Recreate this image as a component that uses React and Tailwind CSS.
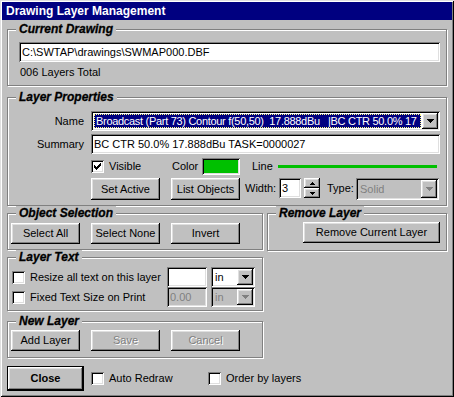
import React from 'react';

const sunken =
  'shadow-[inset_1px_1px_#808080,inset_-1px_-1px_#ffffff,inset_2px_2px_#000000,inset_-2px_-2px_#dfdfdf]';
const raised =
  'shadow-[inset_-1px_-1px_#000000,inset_1px_1px_#ffffff,inset_-2px_-2px_#808080,inset_2px_2px_#dfdfdf]';
const dimText = 'text-[#808080] [text-shadow:1px_1px_0_#ffffff]';

/* ─── small win32 widgets ─── */
function Group({ title, className = '', children }) {
  return (
    <div
      className={`border border-[#808080] shadow-[inset_1px_1px_#ffffff,1px_1px_#ffffff] ${className}`}
    >
      <div className="-mt-[8px] ml-[8px] w-fit bg-[#c0c0c0] px-[3px] text-[12px] leading-[14px] font-bold italic [-webkit-text-stroke:0.3px_#000000]">
        {title}
      </div>
      {children}
    </div>
  );
}

function Btn({ children, className = '', disabled }) {
  return (
    <button
      type="button"
      className={`${raised} flex shrink-0 items-center justify-center bg-[#c0c0c0] text-[11px] ${
        disabled ? dimText : 'text-black'
      } ${className}`}
    >
      {children}
    </button>
  );
}

function Check({ checked }) {
  return (
    <span
      className={`${sunken} flex h-[13px] w-[13px] shrink-0 items-center justify-center bg-white`}
    >
      {checked && (
        <svg width="7" height="7" viewBox="0 0 7 7" shapeRendering="crispEdges">
          <path
            d="M0 2h1v1h1v1h1v-1h1v-1h1v-1h1v-1h1v3h-1v1h-1v1h-1v1h-1v1h-1v-1h-1v-1h-1z"
            fill="#000000"
          />
        </svg>
      )}
    </span>
  );
}

function Arrow({ up, disabled, w = 7, h = 4 }) {
  return (
    <svg width={w} height={h} viewBox={`0 0 ${w} ${h}`} shapeRendering="crispEdges">
      <path
        d={up ? `M0 ${h}H${w}L${w / 2} 0z` : `M0 0H${w}L${w / 2} ${h}z`}
        fill={disabled ? '#808080' : '#000000'}
      />
    </svg>
  );
}

function Select({ className = '', disabled, children }) {
  return (
    <div
      className={`${sunken} flex shrink-0 p-[2px] ${disabled ? 'bg-[#c0c0c0]' : 'bg-white'} ${className}`}
    >
      <div className="flex min-w-0 flex-1 items-center overflow-hidden whitespace-pre">
        {children}
      </div>
      <span className={`${raised} flex w-[16px] shrink-0 items-center justify-center bg-[#c0c0c0]`}>
        <Arrow disabled={disabled} />
      </span>
    </div>
  );
}

function Field({ className = '', disabled, children }) {
  return (
    <div
      className={`${sunken} flex shrink-0 items-center overflow-hidden whitespace-nowrap pl-[3px] ${
        disabled ? 'bg-[#c0c0c0] text-[#808080]' : 'bg-white'
      } ${className}`}
    >
      {children}
    </div>
  );
}

export default function App() {
  return (
    <div className="h-[397px] w-[454px] overflow-hidden bg-[#c0c0c0] p-[2px] font-['Liberation_Sans',Arial,sans-serif] text-[11px] leading-[13px] text-black shadow-[inset_1px_1px_#dfdfdf,inset_-1px_-1px_#000000,inset_2px_2px_#ffffff,inset_-2px_-2px_#808080]">
      {/* title bar */}
      <div className="flex h-[18px] items-center bg-[#000080] pl-[4px] text-[12px] font-bold text-white">
        Drawing Layer Management
      </div>

      <div className="px-[5px]">
        {/* current drawing */}
        <Group title="Current Drawing" className="mt-[9px] h-[57px]">
          <Field className="ml-[11px] mt-[6px] h-[20px] w-[421px]">
            {'C:\\SWTAP\\drawings\\SWMAP000.DBF'}
          </Field>
          <div className="ml-[12px] mt-[4px]">006 Layers Total</div>
        </Group>

        {/* layer properties */}
        <Group title="Layer Properties" className="mt-[11px] h-[109px]">
          <div className="mt-[7px] flex items-center">
            <span className="w-[76px] text-right">Name</span>
            <Select className="ml-[7px] h-[20px] w-[349px]">
              <div className="flex h-full flex-1 items-center p-[1px]">
                <span className="flex h-full flex-1 items-center overflow-hidden border border-dotted border-[#ffff80] bg-[#000080] pl-[1px] tracking-[-0.3px] text-white">
                  {'Broadcast (Part 73) Contour f(50,50)  17.888dBu   |BC CTR 50.0% 17'}
                </span>
              </div>
            </Select>
          </div>
          <div className="mt-[3px] flex items-center">
            <span className="w-[76px] text-right">Summary</span>
            <Field className="ml-[7px] h-[20px] w-[349px]">
              BC CTR 50.0% 17.888dBu TASK=0000027
            </Field>
          </div>
          <div className="mt-[4px] flex h-[17px] items-center pl-[83px]">
            <div className="flex w-[81px] items-center gap-[5px]">
              <Check checked />
              <span>Visible</span>
            </div>
            <span className="w-[30px]">Color</span>
            <span className={`${sunken} h-[17px] w-[38px] bg-white p-[2px]`}>
              <span className="block h-full w-full bg-[#00c000]" />
            </span>
            <span className="ml-[12px] w-[26px]">Line</span>
            <span className="h-[3px] w-[159px] bg-[#00c000]" />
          </div>
          <div className="mt-[3px] flex items-start pl-[83px]">
            <Btn className="h-[22px] w-[69px]">Set Active</Btn>
            <Btn className="ml-[11px] h-[22px] w-[69px]">List Objects</Btn>
            <span className="flex h-[20px] w-[39px] items-center pl-[5px]">Width:</span>
            <Field className="h-[20px] w-[22px]">3</Field>
            <div className="ml-[3px] flex h-[20px] w-[16px] flex-col">
              <span className={`${raised} flex flex-1 items-center justify-center bg-[#c0c0c0]`}>
                <Arrow up w={5} h={3} />
              </span>
              <span className={`${raised} flex flex-1 items-center justify-center bg-[#c0c0c0]`}>
                <Arrow w={5} h={3} />
              </span>
            </div>
            <span className="flex h-[20px] w-[36px] items-center pl-[7px]">Type:</span>
            <Select disabled className="h-[22px] w-[83px]">
              <span className="pl-[2px] text-[#808080]">Solid</span>
            </Select>
          </div>
        </Group>

        <div className="mt-[7px] flex items-start">
          <div className="w-[256px]">
            {/* object selection */}
            <Group title="Object Selection" className="h-[37px]">
              <div className="mt-[3px] flex pl-[3px]">
                <Btn className="h-[21px] w-[69px]">Select All</Btn>
                <Btn className="ml-[11px] h-[21px] w-[69px]">Select None</Btn>
                <Btn className="ml-[11px] h-[21px] w-[69px]">Invert</Btn>
              </div>
            </Group>

            {/* layer text */}
            <Group title="Layer Text" className="mt-[7px] h-[54px]">
              <div className="mt-[3px] flex h-[20px] items-center pl-[4px]">
                <Check />
                <span className="w-[142px] pl-[5px]">Resize all text on this layer</span>
                <Field className="h-[20px] w-[40px]" />
                <Select className="ml-[4px] h-[20px] w-[44px]">
                  <span className="pl-[2px]">in</span>
                </Select>
              </div>
              <div className="flex h-[20px] items-center pl-[4px]">
                <Check />
                <span className="w-[142px] pl-[5px]">Fixed Text Size on Print</span>
                <Field disabled className="h-[20px] w-[40px]">
                  0.00
                </Field>
                <Select disabled className="ml-[4px] h-[20px] w-[44px]">
                  <span className="pl-[2px] text-[#808080]">in</span>
                </Select>
              </div>
            </Group>

            {/* new layer */}
            <Group title="New Layer" className="mt-[10px] h-[37px]">
              <div className="mt-[2px] flex pl-[3px]">
                <Btn className="h-[21px] w-[69px]">Add Layer</Btn>
                <Btn disabled className="ml-[11px] h-[21px] w-[69px]">
                  Save
                </Btn>
                <Btn disabled className="ml-[11px] h-[21px] w-[69px]">
                  Cancel
                </Btn>
              </div>
            </Group>
          </div>

          {/* remove layer */}
          <Group title="Remove Layer" className="ml-[4px] h-[38px] w-[180px]">
            <div className="mt-[2px] flex pl-[35px]">
              <Btn className="h-[21px] w-[137px]">Remove Current Layer</Btn>
            </div>
          </Group>
        </div>

        {/* footer */}
        <div className="mt-[8px] flex h-[25px] items-center">
          <div className="h-[25px] w-[77px] border border-black">
            <Btn className="h-full w-full font-bold">Close</Btn>
          </div>
          <div className="ml-[7px] flex w-[117px] items-center gap-[5px]">
            <Check />
            <span>Auto Redraw</span>
          </div>
          <div className="flex items-center gap-[5px]">
            <Check />
            <span>Order by layers</span>
          </div>
        </div>
      </div>
    </div>
  );
}
